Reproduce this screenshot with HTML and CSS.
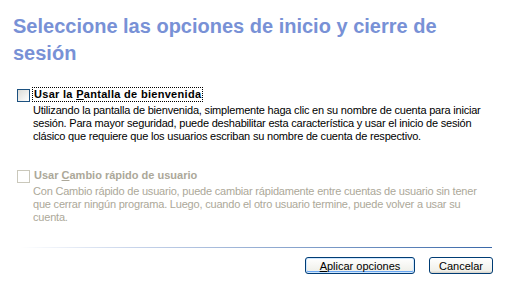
FILE: index.html
```html
<!DOCTYPE html>
<html lang="es">
<head>
    <meta charset="UTF-8">
    <title>Opciones de inicio de sesión</title>
    <link rel="stylesheet" href="styles.css">
</head>
<body>

<div class="panel-sesion">
    <h1 class="titulo">Seleccione las opciones de inicio y cierre de sesión</h1>

    <div class="opcion">
        <span class="casilla"></span>
        <div class="opcion-texto">
            <span class="etiqueta enfocada">Usar la <u>P</u>antalla de bienvenida</span>
            <p>Utilizando la pantalla de bienvenida, simplemente haga clic en su nombre de cuenta para iniciar sesión. Para mayor seguridad, puede deshabilitar esta característica y usar el inicio de sesión clásico que requiere que los usuarios escriban su nombre de cuenta de respectivo.</p>
        </div>
    </div>

    <div class="opcion deshabilitada">
        <span class="casilla"></span>
        <div class="opcion-texto">
            <span class="etiqueta">Usar <u>C</u>ambio rápido de usuario</span>
            <p>Con Cambio rápido de usuario, puede cambiar rápidamente entre cuentas de usuario sin tener que cerrar ningún programa. Luego, cuando el otro usuario termine, puede volver a usar su cuenta.</p>
        </div>
    </div>

    <div class="separador"></div>

    <div class="botones">
        <button type="button" class="boton boton-principal"><u>A</u>plicar opciones</button>
        <button type="button" class="boton">Cancelar</button>
    </div>
</div>

</body>
</html>
```

FILE: styles.css
```css
body {
    margin: 0;
    padding: 0;
    background-color: white;
    font-family: "Liberation Sans", Arial, sans-serif;
    font-size: 11px;
    color: black;
}

.panel-sesion {
    width: 512px;
    height: 290px;
    padding: 13px 0 0 0;
    box-sizing: border-box;
}

.titulo {
    margin: 0 40px 0 13px;
    font-size: 20px;
    line-height: 27px;
    font-weight: bold;
    color: #7891d6;
}

.opcion {
    display: flex;
    gap: 3px;
    margin-left: 17px;
    margin-right: 20px;
}

.opcion:first-of-type {
    margin-top: 21px;
}

.deshabilitada {
    margin-top: 26px;
    color: #aca899;
}

.casilla {
    flex: none;
    width: 11px;
    height: 11px;
    margin-top: 1px;
    border: 1px solid #1c5180;
    background: linear-gradient(135deg, #dcdcd7, #ffffff);
}

.deshabilitada .casilla {
    border-color: #cac8bb;
    background: white;
}

.etiqueta {
    display: inline-block;
    font-weight: bold;
    line-height: 13px;
    padding: 0 1px;
    letter-spacing: 0.3px;
}

.deshabilitada .etiqueta {
    letter-spacing: 0;
}

.enfocada {
    outline: 1px dotted black;
    outline-offset: 0;
}

.opcion-texto p {
    margin: 3px 0 0 0;
    line-height: 13px;
    letter-spacing: -0.2px;
}

.separador {
    height: 1px;
    margin: 23px 20px 0 20px;
    background: linear-gradient(to right, #ffffff, #c6d3ea 25%, #3a68a8);
}

.botones {
    display: flex;
    justify-content: flex-end;
    gap: 14px;
    margin: 9px 19px 0 0;
}

.boton {
    height: 17px;
    padding: 0 8px;
    font-family: "Liberation Sans", Arial, sans-serif;
    font-size: 11px;
    color: black;
    border: 1px solid #003c74;
    border-radius: 3px;
    background: linear-gradient(#ffffff, #f0f0ea 85%, #d6d0c5);
    cursor: pointer;
}

.boton-principal {
    width: 110px;
    box-shadow: inset 0 0 0 1px #cee7ff, inset 0 -1px 0 1px #69a6f3;
}

.boton:last-child {
    width: 64px;
}
```
